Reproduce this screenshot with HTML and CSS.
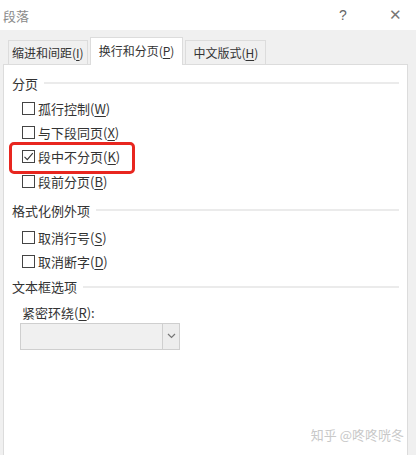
FILE: index.html
```html
<!DOCTYPE html>
<html lang="zh-CN">
<head>
  <meta charset="UTF-8">
  <title>段落</title>
  <link rel="stylesheet" href="styles.css">
</head>
<body>
  <div class="dialog">
    <div class="titlebar">
      <span class="title">段落</span>
      <span class="help">?</span>
      <span class="close">✕</span>
    </div>

    <div class="tabs">
      <div class="tab first">缩进和间距(<u>I</u>)</div>
      <div class="tab active">换行和分页(<u>P</u>)</div>
      <div class="tab">中文版式(<u>H</u>)</div>
    </div>

    <div class="panel">
      <div class="group-title"><span>分页</span></div>
      <div class="checks">
        <label class="check"><span class="box"></span>孤行控制(<u>W</u>)</label>
        <label class="check"><span class="box"></span>与下段同页(<u>X</u>)</label>
        <label class="check marked"><span class="box">
          <svg width="11" height="11" viewBox="0 0 11 11"><path d="M1.5 5.8 L4.3 8.6 L9.8 2.2" fill="none" stroke="#333" stroke-width="1.1"/></svg>
        </span>段中不分页(<u>K</u>)</label>
        <label class="check"><span class="box"></span>段前分页(<u>B</u>)</label>
      </div>

      <div class="group-title"><span>格式化例外项</span></div>
      <div class="checks short">
        <label class="check"><span class="box"></span>取消行号(<u>S</u>)</label>
        <label class="check"><span class="box"></span>取消断字(<u>D</u>)</label>
      </div>

      <div class="group-title"><span>文本框选项</span></div>
      <div class="wrap-field">
        <div class="field-label">紧密环绕(<u>R</u>):</div>
        <div class="select">
          <span class="arrow">
            <svg width="9" height="6" viewBox="0 0 9 6"><path d="M1 1 L4.5 4.5 L8 1" fill="none" stroke="#777" stroke-width="1.2"/></svg>
          </span>
        </div>
      </div>

      <div class="watermark">知乎 @咚咚咣冬</div>
    </div>
  </div>
</body>
</html>
```
FILE: styles.css
```css
html, body {
    margin: 0;
    padding: 0;
    background-color: #f0f0f0;
}

body {
    font-family: "Noto Sans CJK SC", "Liberation Sans", sans-serif;
    font-size: 12.5px;
    color: #222;
    width: 416px;
    height: 455px;
    overflow: hidden;
}

u {
    text-decoration-thickness: 1px;
    text-underline-offset: 2px;
}

.dialog {
    height: 455px;
    display: flex;
    flex-direction: column;
}

.titlebar {
    height: 30px;
    background-color: #fff;
    display: flex;
    align-items: center;
    color: #8a8a8a;
    font-size: 13px;
}

.title {
    margin-left: 3px;
    flex: 1;
}

.help {
    width: 16px;
    margin-right: 34px;
    font-family: "Liberation Sans", sans-serif;
    font-size: 14px;
    color: #666;
}

.close {
    width: 14px;
    margin-right: 13px;
    font-size: 15px;
    color: #777;
    font-family: "DejaVu Sans", sans-serif;
}

.tabs {
    display: flex;
    align-items: flex-end;
    gap: 2px;
    height: 34px;
    padding-left: 8px;
    position: relative;
    z-index: 1;
}

.tab {
    height: 23px;
    line-height: 23px;
    padding: 0 7px;
    background-color: #f0f0f0;
    border: 1px solid #dcdcdc;
    border-bottom: none;
    color: #333;
    font-size: 12px;
}

.tab.first {
    padding: 0 3px;
}

.tab.active {
    background-color: #fff;
    height: 27px;
    line-height: 26px;
    padding: 0 8px;
    margin-bottom: -1px;
}

.panel {
    flex: 1;
    margin: 0 8px 0 3px;
    background-color: #fff;
    border: 1px solid #dcdcdc;
    border-bottom: none;
    padding: 8px 8px 0 8px;
    position: relative;
}

.group-title {
    display: flex;
    align-items: center;
    gap: 6px;
    height: 20px;
    color: #333;
    font-size: 13px;
}

.group-title::after {
    content: "";
    flex: 1;
    height: 2px;
    background-color: #ebebeb;
}

.checks {
    display: flex;
    flex-direction: column;
    padding: 3px 0 7px 10px;
}

.checks.short {
    padding-top: 5px;
    padding-bottom: 3px;
}

.check {
    display: flex;
    align-items: center;
    height: 24.3px;
    font-size: 13px;
    color: #333;
}

.box {
    width: 11px;
    height: 11px;
    border: 1px solid #444;
    margin-right: 3px;
    display: flex;
    align-items: center;
    justify-content: center;
    background-color: #fff;
}

.check.marked {
    position: relative;
}

.check.marked::before {
    content: "";
    position: absolute;
    left: -13px;
    top: -3px;
    width: 120px;
    height: 26px;
    border: 3px solid #e8261f;
    border-radius: 5px;
}

.wrap-field {
    padding: 6px 0 0 10px;
}

.field-label {
    font-size: 13px;
    color: #333;
    height: 20px;
}

.select {
    margin-left: -2px;
    width: 158px;
    height: 25px;
    background-color: #f0f0f0;
    border: 1px solid #cfcfcf;
    display: flex;
    justify-content: flex-end;
}

.arrow {
    width: 16px;
    border-left: 1px solid #cfcfcf;
    background-color: #ededed;
    display: flex;
    align-items: center;
    justify-content: center;
}

.watermark {
    position: absolute;
    right: 3px;
    bottom: 11px;
    color: #c8c8c8;
    font-size: 13px;
}
```
